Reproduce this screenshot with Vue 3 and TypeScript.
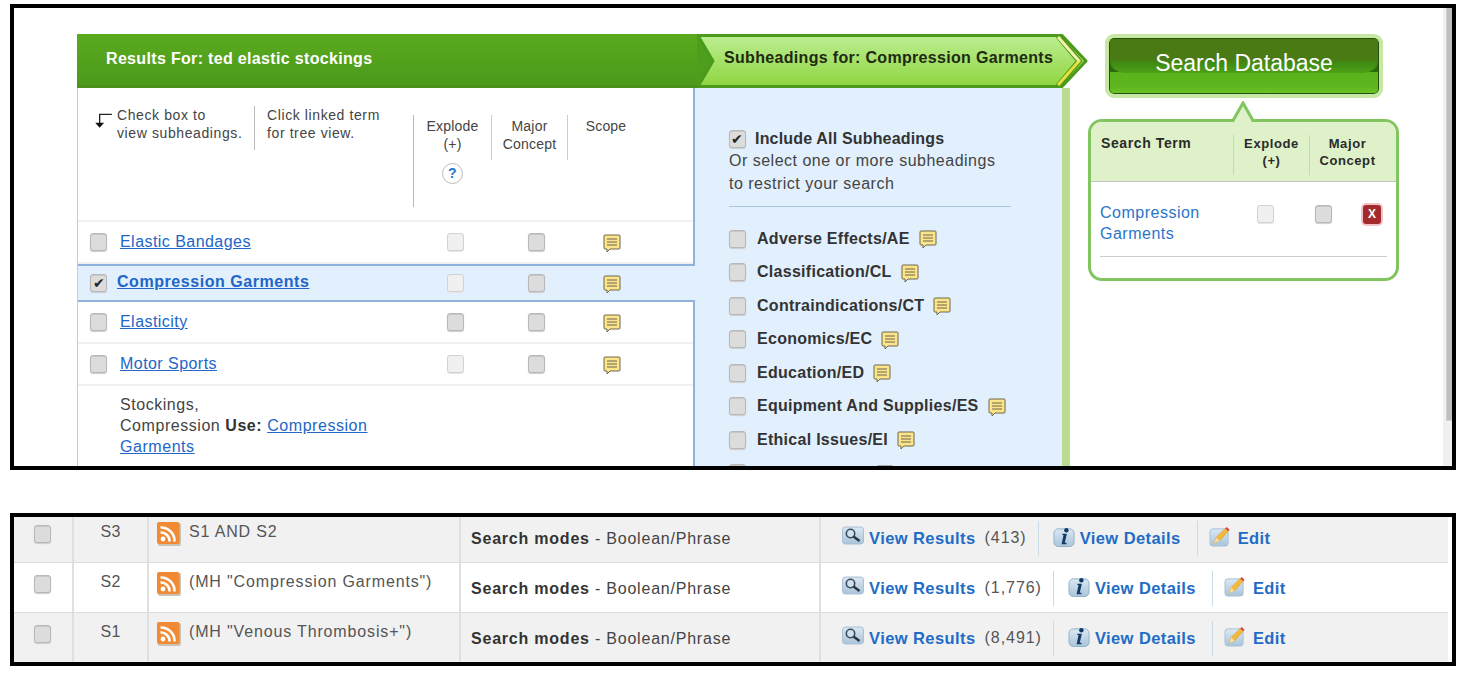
<script setup lang="ts">
interface Term { name: string; explode: boolean; selected?: boolean }
const terms: Term[] = [
  { name: 'Elastic Bandages', explode: false },
  { name: 'Compression Garments', explode: false, selected: true },
  { name: 'Elasticity', explode: true },
  { name: 'Motor Sports', explode: false },
]
const subs = [
  'Adverse Effects/AE', 'Classification/CL', 'Contraindications/CT', 'Economics/EC',
  'Education/ED', 'Equipment And Supplies/ES', 'Ethical Issues/EI', 'Evaluation/EV',
]
const history = [
  { id: 'S3', q: 'S1 AND S2', n: '(413)', alt: true },
  { id: 'S2', q: '(MH "Compression Garments")', n: '(1,776)', alt: false },
  { id: 'S1', q: '(MH "Venous Thrombosis+")', n: '(8,491)', alt: true },
]
</script>

<template>
  <div class="page">
    <section class="frame top">
      <div class="canvas">
        <div class="main">
          <div class="banner">
            <div class="res-head">Results For: ted elastic stockings</div>
            <div class="sub-head">
              <svg class="chev" viewBox="0 0 392 54" preserveAspectRatio="none" aria-hidden="true">
                <defs>
                  <linearGradient id="lg" x1="0" y1="0" x2="0" y2="1">
                    <stop offset="0" stop-color="#bcee92" />
                    <stop offset="1" stop-color="#8fd53f" />
                  </linearGradient>
                  <linearGradient id="ys" x1="0" y1="0" x2="0" y2="1">
                    <stop offset="0.45" stop-color="#f6f2a8" />
                    <stop offset="0.55" stop-color="#e8e03c" />
                  </linearGradient>
                </defs>
                <path d="M0 0H3L17 27L3 54H0Z" fill="#4f9d1c" />
                <path d="M1 1.500H366L390 27L366 52.500H1L16 27Z" fill="url(#lg)" stroke="#4c9a1c" stroke-width="3" stroke-linejoin="round" />
                <path d="M362 2L383 27L362 52" fill="none" stroke="#4c9a1c" stroke-width="5.500" />
                <path d="M362 3L383 27L362 51" fill="none" stroke="url(#ys)" stroke-width="3" />
              </svg>
              <span class="sub-title">Subheadings for: Compression Garments</span>
            </div>
          </div>
          <div class="columns">
            <div class="terms">
              <div class="hints">
                <svg class="arrow" viewBox="0 0 18 16" aria-hidden="true">
                  <path d="M17 2H6V11" fill="none" stroke="#222" stroke-width="1.200" />
                  <path d="M2 9.500H10L6 14Z" fill="#111" />
                </svg>
                <div class="hint one">Check box to<br />view subheadings.</div>
                <div class="hint two">Click linked term<br />for tree view.</div>
                <div class="hcol explode">
                  <span>Explode<br />(+)</span>
                  <span class="help">?</span>
                </div>
                <div class="hcol major">Major<br />Concept</div>
                <div class="hcol scope">Scope</div>
              </div>
              <div
                v-for="t in terms"
                :key="t.name"
                class="term"
                :class="{ selected: t.selected }"
              >
                <span class="cb" :class="{ on: t.selected }">{{ t.selected ? '✔' : '' }}</span>
                <a class="link name">{{ t.name }}</a>
                <span class="cb c1" :class="{ off: !t.explode }"></span>
                <span class="cb c2"></span>
                <svg class="note c3" viewBox="0 0 18 19" aria-hidden="true">
                  <path d="M2 1H16Q17 1 17 2V14Q17 15 16 15H7L4 18V15H2Q1 15 1 14V2Q1 1 2 1Z" fill="#fbe588" stroke="#6f6650" />
                  <path d="M4 5H14M4 8H14M4 11H14" stroke="#6b6450" />
                </svg>
              </div>
              <div class="entry">
                Stockings,<br />Compression <b>Use:</b> <a class="link">Compression</a><br /><a class="link">Garments</a>
              </div>
            </div>
            <div class="subs">
              <div class="include">
                <span class="cb on">✔</span><b>Include All Subheadings</b>
              </div>
              <p class="or">Or select one or more subheadings<br />to restrict your search</p>
              <div class="sub-list">
                <div v-for="s in subs" :key="s" class="sub">
                  <span class="cb"></span><b>{{ s }}</b>
                  <svg class="note" viewBox="0 0 18 19" aria-hidden="true">
                    <path d="M2 1H16Q17 1 17 2V14Q17 15 16 15H7L4 18V15H2Q1 15 1 14V2Q1 1 2 1Z" fill="#fbe588" stroke="#6f6650" />
                    <path d="M4 5H14M4 8H14M4 11H14" stroke="#6b6450" />
                  </svg>
                </div>
              </div>
            </div>
          </div>
        </div>
        <aside class="side">
          <button class="search"><span class="search-label">Search Database</span></button>
          <div class="basket">
            <svg class="caret" viewBox="0 0 40 22" aria-hidden="true">
              <path d="M10 22L20 3L30 22Z" fill="#dff1c8" />
              <path d="M0 19.500H10L20 2L30 19.500H40" fill="none" stroke="#82c45f" stroke-width="3" />
            </svg>
            <div class="b-head">
              <b class="b-term">Search Term</b>
              <b class="b-col">Explode<br />(+)</b>
              <b class="b-col">Major<br />Concept</b>
            </div>
            <div class="b-body">
              <div class="b-row">
                <a class="b-link">Compression<br />Garments</a>
                <span class="cb off"></span>
                <span class="cb"></span>
                <span class="x">X</span>
              </div>
            </div>
          </div>
        </aside>
        <div class="scrollbar"><div class="thumb"></div></div>
      </div>
    </section>

    <section class="frame bottom">
      <div
        v-for="r in history"
        :key="r.id"
        class="row"
        :class="{ alt: r.alt }"
      >
        <div class="cell chk"><span class="cb"></span></div>
        <div class="cell sid">{{ r.id }}</div>
        <div class="cell query">
          <svg class="rss" viewBox="0 0 24 24" aria-hidden="true">
            <rect x="1" y="1" width="23" height="23" rx="2" fill="#c9c2b6" />
            <rect x="0" y="0" width="22.500" height="22" rx="2" fill="#f08a34" />
            <circle cx="6" cy="17" r="2.400" fill="#fff" />
            <path d="M3.500 10.500A8.500 8.500 0 0 1 12.500 19.500M3.500 5.500A13.500 13.500 0 0 1 17.500 19.500" fill="none" stroke="#fff" stroke-width="2.600" />
          </svg>
          <span>{{ r.q }}</span>
        </div>
        <div class="cell modes"><b>Search modes</b> - Boolean/Phrase</div>
        <div class="cell actions">
          <span class="act first">
            <svg class="ic" viewBox="0 0 22 20" aria-hidden="true">
              <defs>
                <linearGradient id="bl" x1="0" y1="0" x2="0" y2="1">
                  <stop offset="0" stop-color="#dbe8f3" />
                  <stop offset="1" stop-color="#a9c4da" />
                </linearGradient>
              </defs>
              <rect x="0.500" y="0.500" width="21" height="17" rx="3" fill="url(#bl)" stroke="#a8c0d4" />
              <circle cx="8.500" cy="7" r="4.200" fill="#cfe0ee" stroke="#3d4b58" stroke-width="1.600" />
              <path d="M11.500 10L17.500 14.500" stroke="#2d3640" stroke-width="2.400" />
            </svg>
            <a class="alink">View Results</a><span class="count">{{ r.n }}</span>
          </span>
          <span class="act">
            <svg class="ic" viewBox="0 0 22 22" aria-hidden="true">
              <rect x="0.500" y="3" width="21" height="18.500" rx="4.500" fill="url(#bl)" stroke="#8fb0c9" />
              <path d="M9.500 8H14L11.800 17.500H13.800L13.400 19H8.500L10.500 9.500H9.200Z" fill="#123a66" />
              <circle cx="13.500" cy="4.500" r="2.300" fill="#123a66" />
            </svg>
            <a class="alink">View Details</a>
          </span>
          <span class="act">
            <svg class="ic" viewBox="0 0 22 22" aria-hidden="true">
              <rect x="0.500" y="3" width="19" height="18" rx="3" fill="url(#bl)" stroke="#a9c0d4" />
              <path d="M5 18L7 12L16.500 2.500L19.500 5.500L10.500 15.500Z" fill="#f5b93a" stroke="#d59a24" stroke-width="0.600" />
              <path d="M5 18L7 12L10.500 15.500Z" fill="#f9e0a0" />
              <path d="M16.500 2.500L18 1L21 4L19.500 5.500Z" fill="#d6453a" />
            </svg>
            <a class="alink">Edit</a>
          </span>
        </div>
      </div>
    </section>
  </div>
</template>

<style>
html, body { background: #fff; margin: 0; }
</style>

<style scoped>
.page {
  width: 1469px;
  height: 683px;
  overflow: hidden;
  background: #fff;
  font-family: "Liberation Sans", Arial, sans-serif;
  color: #444;
  box-sizing: border-box;
  padding: 4px 13px 0 10px;
  display: flex;
  flex-direction: column;
  gap: 43px;
}
.frame {
  border: 4px solid #000;
  box-sizing: border-box;
  overflow: hidden;
  flex: none;
}
.top { height: 466px; }
.bottom { height: 153px; }
.canvas {
  position: relative;
  display: flex;
  height: 100%;
  padding: 26px 0 0 63px;
  box-sizing: border-box;
}
.main { width: 1011px; flex: none; }
.banner { display: flex; height: 54px; }
.res-head {
  width: 620px;
  background: linear-gradient(#5aaa1e, #4c9a1c);
  color: #fff;
  font-size: 16px;
  letter-spacing: 0.33px;
  font-weight: 700;
  line-height: 50px;
  padding-left: 29px;
  box-sizing: border-box;
  border-bottom: 3px solid #4a9119;
}
.sub-head {
  position: relative;
  width: 391px;
  height: 54px;
}
.chev { position: absolute; inset: 0; width: 100%; height: 100%; }
.sub-title {
  position: relative;
  display: block;
  padding-left: 27px;
  font-size: 16px;
  letter-spacing: 0.32px;
  font-weight: 700;
  line-height: 48px;
  color: #1f2a12;
  white-space: nowrap;
}
.columns { display: flex; width: 993px; height: 380px; }
.terms {
  width: 618px;
  flex: none;
  box-sizing: border-box;
  border-left: 1px solid #b8dd96;
  border-right: 2px solid #8fb2dc;
}
.hints {
  position: relative;
  height: 134px;
  border-bottom: 2px solid #f0f0f0;
  box-sizing: border-box;
  display: flex;
  font-size: 14px;
  letter-spacing: 0.6px;
  line-height: 18px;
  color: #444;
}
.arrow { position: absolute; left: 15px; top: 24px; width: 20px; height: 18px; }
.hint { margin-top: 18px; height: 44px; white-space: nowrap; }
.hint.one { margin-left: 39px; width: 137px; border-right: 1px solid #bbb; }
.hint.two { padding-left: 12px; width: 146px; }
.hcol { margin-top: 27px; text-align: center; font-size: 14px; letter-spacing: 0.2px; }
.hcol.explode {
  width: 77px;
  height: 90px;
  border-left: 1px solid #bbb;
  position: relative;
  padding-top: 2px;
}
.hcol.major {
  width: 75px;
  height: 43px;
  border-left: 1px solid #ccc;
  padding-top: 2px;
}
.hcol.scope { width: 76px; height: 43px; border-left: 1px solid #ccc; padding-top: 2px; }
.help {
  display: block;
  width: 21px;
  height: 21px;
  margin: 10px auto 0;
  border: 1px solid #bbb;
  border-radius: 50%;
  box-sizing: border-box;
  color: #2277d0;
  font-weight: 700;
  font-size: 14px;
  line-height: 19px;
}
.cb {
  display: inline-block;
  flex: none;
  box-sizing: border-box;
  width: 17px;
  height: 18px;
  border: 1px solid #b8b8b8;
  border-radius: 3px;
  background: #dcdcdc;
  box-shadow: inset 0 1px 0 #c8c8c8, 0 1px 1px #ccc;
  color: #222;
  font-size: 14px;
  line-height: 16px;
  text-align: center;
}
.cb.off { background: #f0f0f0; border-color: #d2d2d2; box-shadow: 0 1px 0 #e6e6e6; }
.term {
  display: flex;
  align-items: center;
  height: 42px;
  box-sizing: border-box;
  border-bottom: 2px solid #f0f0f0;
  font-size: 16px;
  position: relative;
}
.term .cb:first-child { margin-left: 12px; }
.term .name { margin-left: 13px; width: 327px; letter-spacing: 0.45px; margin-top: -1px; }
.link { color: #2166c8; text-decoration: underline; }
.term .c2 { margin-left: 64px; }
.term .note { margin: 3px 0 0 58px; }
.term.selected {
  background: #e2effc;
  border-top: 2px solid #8fb2dc;
  border-bottom: 2px solid #8fb2dc;
  margin-right: -2px;
  height: 38px;
}
.term.selected .name { margin-left: 10px; width: 330px; font-weight: 700; letter-spacing: 0.55px; margin-top: -3px; }
.entry {
  padding: 8px 0 0 42px;
  font-size: 16px;
  letter-spacing: 0.55px;
  line-height: 21px;
  color: #444;
}
.entry b { color: #333; }
.note { width: 18px; height: 19px; flex: none; }
.subs {
  flex: 1;
  background: #e2effc;
  border-right: 8px solid #b9dc92;
  padding: 40px 0 0 34px;
  font-size: 16px;
  box-sizing: border-box;
  overflow: hidden;
}
.include { display: flex; align-items: center; gap: 9px; color: #333; line-height: 22px; letter-spacing: 0.18px; }
.or {
  margin: 0;
  padding-bottom: 11px;
  width: 282px;
  letter-spacing: 0.5px;
  line-height: 22.500px;
  border-bottom: 1px solid #a9c6dc;
  color: #444;
  white-space: nowrap;
}
.sub-list { padding-top: 15px; }
.sub {
  display: flex;
  align-items: center;
  height: 33.500px;
  color: #333;
  letter-spacing: 0.28px;
}
.sub .cb { margin-right: 11px; }
.sub .note { margin: 2px 0 0 9px; }
.side { width: 325px; flex: none; position: relative; }
.search {
  position: relative;
  display: block;
  margin-left: 17px;
  width: 278px;
  height: 64px;
  box-sizing: border-box;
  border: 4px solid #c6e8a4;
  padding: 0;
  border-radius: 9px;
  background: linear-gradient(#2c6a0c 0 34px, #5bb31c 34px, #5eb61e 48px, #6cc424 100%) padding-box;
  box-shadow: inset 0 0 0 1px #24500c;
  color: #fff;
  font: 400 23px "Liberation Sans", Arial, sans-serif;
  overflow: hidden;
}
.search::before {
  content: "";
  position: absolute;
  left: 1px;
  right: 1px;
  top: 1px;
  height: 34px;
  border-radius: 0 0 16px 16px / 0 0 12px 12px;
  background: linear-gradient(#4a7a14 0 58%, #3f8c12 72%, #4f9f16 100%);
}
.search-label {
  position: relative;
  display: block;
  margin-top: -5px;
}
.basket {
  position: relative;
  margin: 21px 0 0 0;
  width: 311px;
  height: 162px;
  box-sizing: border-box;
  border: 3px solid #82c45f;
  border-radius: 14px;
}
.caret {
  position: absolute;
  left: 132px;
  top: -21px;
  width: 40px;
  height: 22px;
}
.b-head {
  display: flex;
  height: 60px;
  background: #dff1c8;
  border-bottom: 1px solid #c4c4c4;
  border-radius: 10px 10px 0 0;
  font-size: 14px;
  color: #2a2a2a;
  box-sizing: border-box;
  padding-top: 13px;
}
.b-term { width: 142px; padding-left: 10px; box-sizing: border-box; letter-spacing: 0.6px; }
.b-col {
  width: 76px;
  height: 40px;
  border-left: 1px solid #c6d8b2;
  text-align: center;
  font-size: 13px;
  letter-spacing: 0.6px;
  line-height: 17px;
  box-sizing: border-box;
}
.b-body { padding: 0 9px; }
.b-row {
  position: relative;
  display: flex;
  align-items: flex-start;
  height: 75px;
  padding-top: 20px;
  box-sizing: border-box;
  border-bottom: 1px solid #ccc;
}
.b-link { width: 157px; margin-left: 0; color: #2a75c8; font-size: 16px; letter-spacing: 0.5px; line-height: 21px; flex: none; }
.b-row .cb { margin-top: 3px; }
.b-row .cb.off { margin-right: 41px; }
.x {
  margin: 3px 0 0 31px;
  width: 18px;
  height: 19px;
  background: #a32a2e;
  border-radius: 3px;
  box-shadow: 0 0 0 2px #f1c5c5;
  color: #fff;
  font-size: 12px;
  font-weight: 700;
  line-height: 19px;
  text-align: center;
}
.scrollbar {
  position: absolute;
  top: 0;
  right: 0;
  width: 9px;
  height: 100%;
  background: #f0f0f0;
  display: flex;
  justify-content: flex-end;
}
.thumb {
  width: 6px;
  height: 413px;
  background: #bfbfbf;
  border: 1px solid #d0d0d0;
  border-width: 0 0 1px 1px;
  box-sizing: border-box;
}
.row {
  display: flex;
  height: 50px;
  border-bottom: 1px solid #ddd;
  margin-right: 4px;
  background: #fff;
  font-size: 16px;
  box-sizing: border-box;
}
.row:first-child { margin-top: -4px; }
.row.alt { background: #f1f1f1; }
.row:last-child { border-bottom: 0; }
.cell { box-sizing: border-box; border-right: 2px solid #e0e0e0; flex: none; }
.chk { width: 60px; padding: 12px 0 0 20px; }
.sid { width: 75px; text-align: center; padding-top: 10px; color: #555; letter-spacing: 0.3px; }
.query {
  width: 312px;
  display: flex;
  gap: 8px;
  padding: 11px 0 0 8px;
  line-height: 16px;
  color: #555;
  letter-spacing: 0.85px;
  white-space: nowrap;
}
.rss { width: 24px; height: 24px; flex: none; margin-top: -2px; }
.modes {
  width: 360px;
  padding: 17px 0 0 10px;
  line-height: 18px;
  color: #444;
  letter-spacing: 0.78px;
  white-space: nowrap;
}
.modes b { color: #333; }
.cell.actions {
  border-right: 0;
  flex: 1;
  display: flex;
  padding: 8px 0 0 21px;
}
.act {
  display: flex;
  align-items: flex-start;
  height: 35px;
  padding: 7px 16px 0 14px;
  border-left: 1px solid #c9dbe5;
  line-height: 20px;
  gap: 5px;
  box-sizing: border-box;
  white-space: nowrap;
}
.act:last-child { padding-left: 11px; gap: 7px; }
.act.first { border-left: 0; padding: 7px 11px 0 0; }
.ic { width: 22px; height: 21px; flex: none; margin-top: -2px; }
.alink { color: #1f6cc6; font-weight: 700; font-size: 16.500px; letter-spacing: 0.42px; }
.count { color: #555; margin-left: 4px; font-size: 16px; letter-spacing: 0.95px; }
</style>
